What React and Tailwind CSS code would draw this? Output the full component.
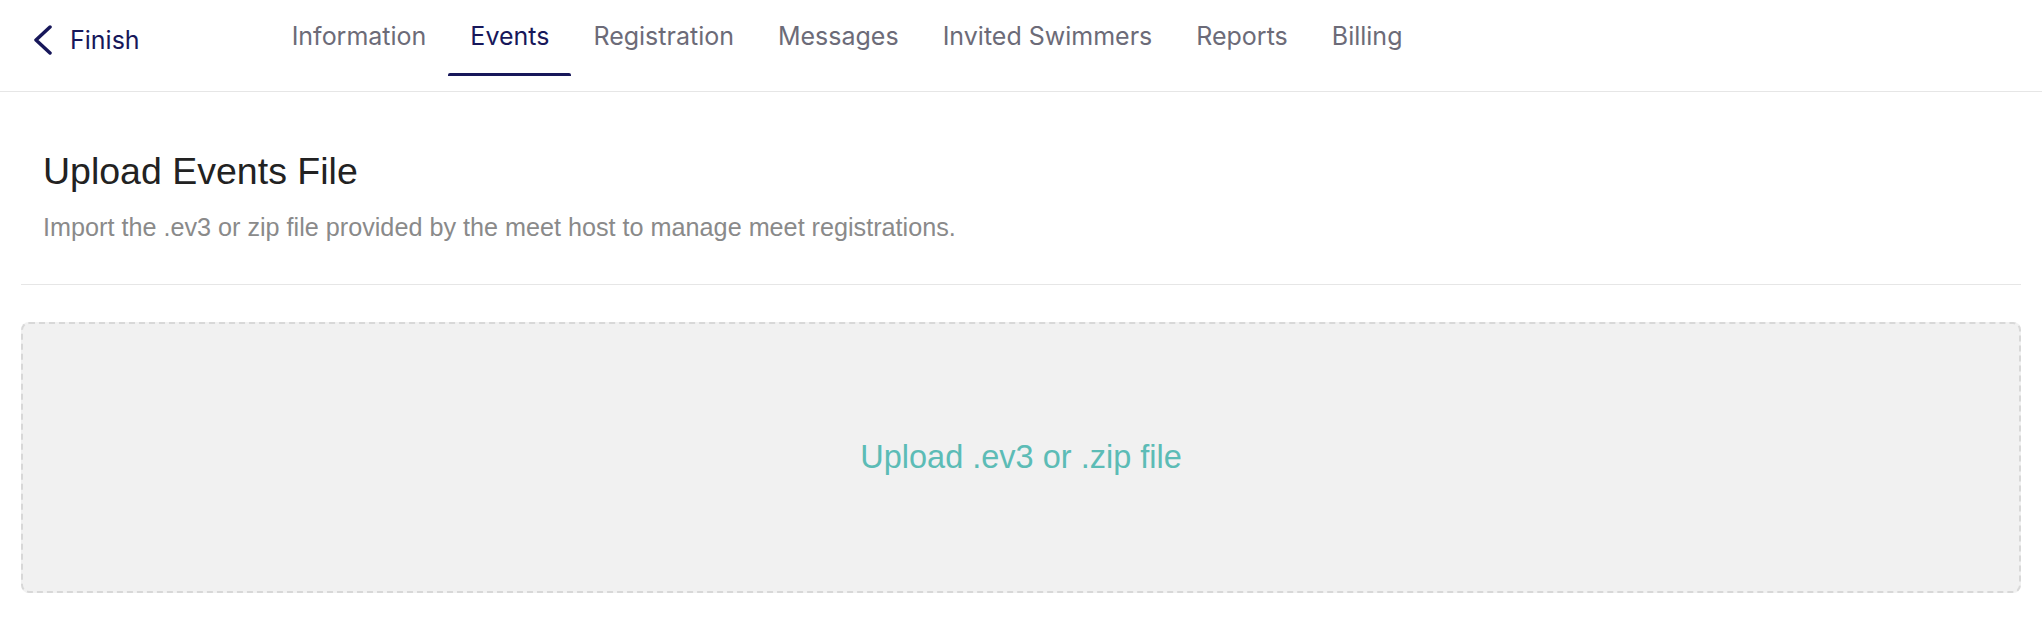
const TABS = ["Information", "Events", "Registration", "Messages", "Invited Swimmers", "Reports", "Billing"];

function BackLink() {
  return (
    <a href="#" className="flex items-center gap-[17px] text-[#17175a] pl-[33px] pt-[25px]">
      <svg width="20" height="30" viewBox="0 0 20 30" fill="none" stroke="currentColor" strokeWidth="3.5" strokeLinecap="round" strokeLinejoin="round">
        <polyline points="17,2 3,15 17,28" />
      </svg>
      <span className="text-[25px] leading-[30px]">Finish</span>
    </a>
  );
}

function Tabs({ active }) {
  return (
    <ul className="flex ml-[130px]">
      {TABS.map((t) => (
        <li key={t}>
          <a
            href="#"
            className={
              "relative block px-[22px] pt-[20px] h-[76px] text-[25px] leading-[32px] " +
              (t === active ? "text-[#17175a]" : "text-[#6c6b78]")
            }
          >
            {t}
            {t === active && (
              <span className="absolute left-0 right-0 bottom-0 h-[3px] rounded-t-[2px] bg-[#17175a]" />
            )}
          </a>
        </li>
      ))}
    </ul>
  );
}

export default function App() {
  return (
    <div className="min-h-screen bg-white" style={{ fontFamily: "Inter, 'Liberation Sans', sans-serif" }}>
      <nav className="flex items-start h-[92px] border-b border-[#e6e6e6]">
        <BackLink />
        <Tabs active="Events" />
      </nav>

      <main className="px-[21px] font-['Liberation_Sans',Arial,sans-serif]">
        <div className="pl-[22px] pt-[58px] pb-[42px] border-b border-[#e6e6e6]">
          <h1 className="text-[37.5px] leading-[42px] text-[#222222]">Upload Events File</h1>
          <p className="mt-[20px] text-[25.2px] leading-[30px] text-[#8a8a8a]">
            Import the .ev3 or zip file provided by the meet host to manage meet registrations.
          </p>
        </div>

        <label className="mt-[37px] flex h-[271px] cursor-pointer items-center justify-center rounded-[8px] border-2 border-dashed border-[#d8d8d8] bg-[#f1f1f1]">
          <input type="file" accept=".ev3,.zip" className="hidden" />
          <span className="text-[32.5px] text-[#5cbcb6]">Upload .ev3 or .zip file</span>
        </label>
      </main>
    </div>
  );
}
